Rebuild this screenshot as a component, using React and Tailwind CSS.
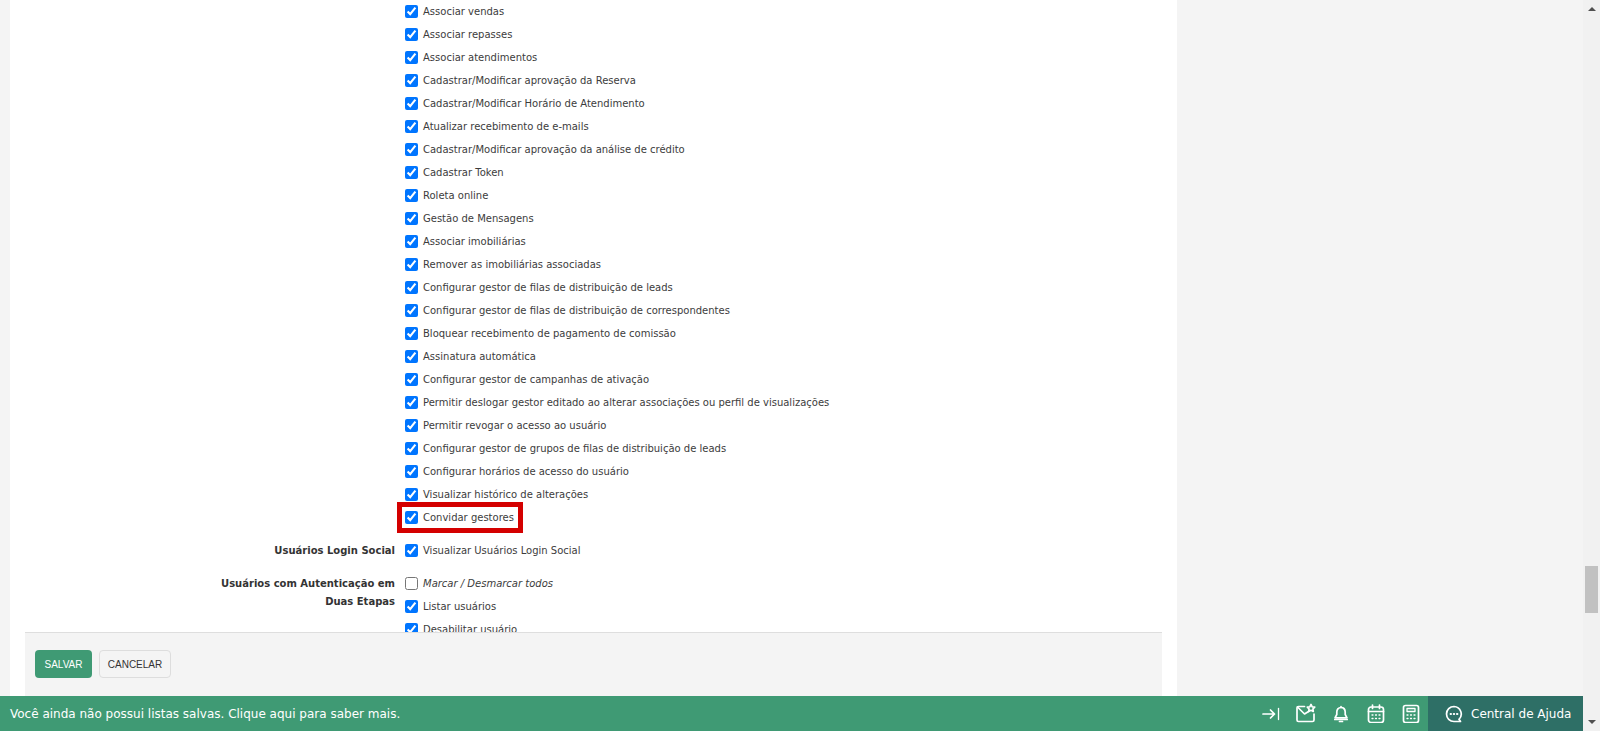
import React from "react";

const rows = [
  "Associar vendas", "Associar repasses", "Associar atendimentos", "Cadastrar/Modificar aprovação da Reserva",
  "Cadastrar/Modificar Horário de Atendimento", "Atualizar recebimento de e-mails", "Cadastrar/Modificar aprovação da análise de crédito",
  "Cadastrar Token", "Roleta online", "Gestão de Mensagens", "Associar imobiliárias", "Remover as imobiliárias associadas",
  "Configurar gestor de filas de distribuição de leads", "Configurar gestor de filas de distribuição de correspondentes",
  "Bloquear recebimento de pagamento de comissão", "Assinatura automática", "Configurar gestor de campanhas de ativação",
  "Permitir deslogar gestor editado ao alterar associações ou perfil de visualizações", "Permitir revogar o acesso ao usuário",
  "Configurar gestor de grupos de filas de distribuição de leads", "Configurar horários de acesso do usuário",
  "Visualizar histórico de alterações",
];

function Row({ label, checked = true, italic = false }) {
  return (
    <label className="flex h-[23px] items-center">
      <input type="checkbox" defaultChecked={checked} className="m-0 h-[13px] w-[13px] shrink-0" />
      <span className={"ml-[5px] text-[10px] text-[#3c3c3c] " + (italic ? "italic" : "")}>{label}</span>
    </label>
  );
}

function Section({ title, children, className = "" }) {
  return (
    <div className={"flex " + className}>
      <div className="w-[370px] shrink-0 pt-[3px] text-right text-[10px] font-bold leading-[18px] text-[#333]">{title}</div>
      <div className="ml-[10px]">{children}</div>
    </div>
  );
}

const ic = { fill: "none", stroke: "currentColor", strokeWidth: 1.7, strokeLinecap: "round", strokeLinejoin: "round" };

const IconArrow = () => (
  <svg width="20" height="20" viewBox="0 0 20 20" {...ic}>
    <path d="M2 11h11.500M9.500 7l4 4-4 4" />
    <path d="M17.500 5.500v11" strokeWidth="1.300" />
  </svg>
);
const IconMail = () => (
  <svg width="22" height="20" viewBox="0 0 22 20" {...ic} className="ml-[14px]">
    <path d="M9.500 3.500H3.500A1.500 1.500 0 0 0 2 5v12A1.500 1.500 0 0 0 3.500 18.500h14a1.500 1.500 0 0 0 1.500-1.500V11" />
    <path d="M2.500 4l7 7 4-2.500" />
    <path d="M16 1.500l1.200 2.300 2.500.4-1.800 1.800.4 2.500-2.300-1.200-2.300 1.200.4-2.500-1.800-1.800 2.500-.4z" />
  </svg>
);
const IconBell = () => (
  <svg width="18" height="20" viewBox="0 0 18 20" {...ic} className="ml-[15px]">
    <path d="M9 4.500c-2.800 0-4.200 2.200-4.200 4.500v2.500L3 14.800h12l-1.800-3.300V9c0-2.300-1.400-4.500-4.200-4.500z" />
    <path d="M9 3.500v1M2.800 16.500h12.400M7.500 18.500h3" />
  </svg>
);
const IconCal = () => (
  <svg width="18" height="20" viewBox="0 0 18 20" {...ic} className="ml-[17px]">
    <rect x="1.500" y="4" width="15" height="15.500" rx="2.500" />
    <path d="M1.500 8.500h15M5.500 2v3.500M12.500 2v3.500" />
    <path d="M5 12h1M8.500 12h1M12 12h1M5 15.500h1M8.500 15.500h1M12 15.500h1" strokeWidth="1.300" />
  </svg>
);
const IconCalc = () => (
  <svg width="18" height="20" viewBox="0 0 18 20" {...ic} className="ml-[17px]">
    <rect x="1.500" y="2.500" width="15" height="17" rx="2" />
    <rect x="5" y="5.500" width="8" height="3" strokeWidth="1.300" />
    <path d="M5 12h1M8.500 12h1M12 12h1M5 15.500h1M8.500 15.500h1M12 15.500h1" strokeWidth="1.300" />
  </svg>
);
const IconChat = () => (
  <svg width="18" height="18" viewBox="0 0 18 18" {...ic}>
    <path d="M9 1.500a7.500 7.500 0 1 0 0 15h6.500l-1.500-2.200A7.500 7.500 0 0 0 9 1.500z" />
    <path d="M5.500 9h.6M8.700 9h.6M11.900 9h.6" strokeWidth="1.800" />
  </svg>
);

export default function App() {
  return (
    <div className="flex h-[731px] w-full overflow-hidden bg-[#f4f4f4] font-['DejaVu_Sans',Verdana,sans-serif]">
      <div className="flex min-w-0 flex-1 flex-col">
        <div className="flex min-h-0 flex-1">
          <div className="ml-[10px] flex w-[1167px] flex-col bg-white px-[15px]">
            <div className="min-h-0 flex-1 overflow-hidden">
              <Section title="">
                {rows.map((r) => <Row key={r} label={r} />)}
                <div className="relative">
                  <Row label="Convidar gestores" />
                  <div className="pointer-events-none absolute left-[-8px] top-[-4px] h-[31px] w-[126px] border-[5px] border-[#d40000]" />
                </div>
              </Section>
              <Section title="Usuários Login Social" className="mt-[10px]">
                <Row label="Visualizar Usuários Login Social" />
              </Section>
              <Section title={<>Usuários com Autenticação em<br />Duas Etapas</>} className="mt-[10px]">
                <Row label="Marcar / Desmarcar todos" checked={false} italic />
                <Row label="Listar usuários" />
                <Row label="Desabilitar usuário" />
              </Section>
            </div>
            <div className="flex h-[64px] shrink-0 gap-[7px] border-t border-[#dedede] bg-[#f4f4f4] pl-[10px] pt-[17px] font-['Liberation_Sans',Arial,sans-serif] text-[10px]">
              <button className="h-[28px] w-[57px] rounded-[4px] bg-[#3f9a74] text-white">SALVAR</button>
              <button className="h-[28px] w-[72px] rounded-[4px] border border-[#dddddd] bg-[#f4f4f4] text-[#333]">CANCELAR</button>
            </div>
          </div>
        </div>
        <div className="flex h-[35px] shrink-0 items-center bg-[#3f9a74] text-white">
          <div className="flex-1 pl-[10px] text-[12px]">Você ainda não possui listas salvas. Clique aqui para saber mais.</div>
          <div className="flex h-full items-center pb-[1px] pr-[8px]">
            <IconArrow />
            <IconMail />
            <IconBell />
            <IconCal />
            <IconCalc />
          </div>
          <div className="flex h-full w-[155px] items-center gap-[8px] bg-[#2e6f66] pl-[17px] text-[12px]">
            <IconChat />
            <span>Central de Ajuda</span>
          </div>
        </div>
      </div>
      <div className="flex w-[17px] shrink-0 flex-col items-center bg-[#f1f1f1] py-[7px]">
        <div className="h-0 w-0 border-x-[4px] border-b-[4px] border-x-transparent border-b-[#505050]" />
        <div className="mt-[555px] h-[47px] w-[13px] bg-[#c1c1c1]" />
        <div className="mt-auto h-0 w-0 border-x-[4px] border-t-[4px] border-x-transparent border-t-[#505050]" />
      </div>
    </div>
  );
}
